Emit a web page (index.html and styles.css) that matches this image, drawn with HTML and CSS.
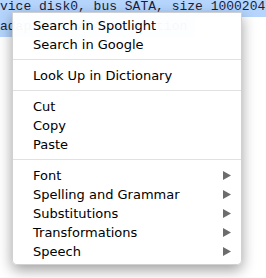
FILE: index.html
```html
<!doctype html>
<html>
	<head>
		<meta charset="utf-8">
		<title>Context Menu</title>
		<link rel="stylesheet" href="styles.css">
	</head>
	<body>
		<div class="console">
			<div class="line"><span class="sel full">vice disk0, bus SATA, size 1000204</span></div>
			<div class="line"><span class="sel">adapter: SATA connection </span></div>
		</div>
		<div class="menu">
			<div class="item">Search in Spotlight</div>
			<div class="item">Search in Google</div>
			<div class="sep"></div>
			<div class="item">Look Up in Dictionary</div>
			<div class="sep"></div>
			<div class="item">Cut</div>
			<div class="item">Copy</div>
			<div class="item">Paste</div>
			<div class="sep"></div>
			<div class="item sub">Font <svg class="arrow" width="8" height="9" viewBox="0 0 8 9"><path d="M0 0L8 4.5L0 9Z"/></svg></div>
			<div class="item sub">Spelling and Grammar <svg class="arrow" width="8" height="9" viewBox="0 0 8 9"><path d="M0 0L8 4.5L0 9Z"/></svg></div>
			<div class="item sub">Substitutions <svg class="arrow" width="8" height="9" viewBox="0 0 8 9"><path d="M0 0L8 4.5L0 9Z"/></svg></div>
			<div class="item sub">Transformations <svg class="arrow" width="8" height="9" viewBox="0 0 8 9"><path d="M0 0L8 4.5L0 9Z"/></svg></div>
			<div class="item sub">Speech <svg class="arrow" width="8" height="9" viewBox="0 0 8 9"><path d="M0 0L8 4.5L0 9Z"/></svg></div>
		</div>
	</body>
</html>
```

FILE: styles.css
```css
* {
	margin: 0;
	padding: 0;
	box-sizing: border-box;
}
body {
	background-color: #fff;
	width: 266px;
	height: 278px;
	overflow: hidden;
	position: relative;
}
.console {
	margin-top: -3px;
	font-family: "Liberation Mono", monospace;
	font-size: 13px;
	line-height: 20px;
	color: #1c1c3a;
}
.line {
	height: 20px;
	white-space: nowrap;
}
.sel {
	display: inline-block;
	white-space: pre;
	background-color: #b5d5fd;
}
.sel.full {
	width: 100%;
}
.menu {
	position: absolute;
	left: 12px;
	top: 12px;
	width: 230px;
	padding: 3px 0 3px 0;
	background-color: rgba(255, 255, 255, 0.97);
	border: 1px solid rgba(0, 0, 0, 0.18);
	border-radius: 0 0 5px 5px;
	box-shadow: 0 5px 14px rgba(0, 0, 0, 0.38);
	font-family: "DejaVu Sans", sans-serif;
	font-size: 13px;
	color: #000;
}
.item {
	height: 19px;
	line-height: 19px;
	padding: 0 10px 0 20px;
	display: flex;
	align-items: center;
	justify-content: space-between;
}
.arrow {
	fill: #6c6c6c;
}
.sep {
	height: 1px;
	margin: 5px 0 6px 0;
	background-color: #e1e1e1;
}
```
